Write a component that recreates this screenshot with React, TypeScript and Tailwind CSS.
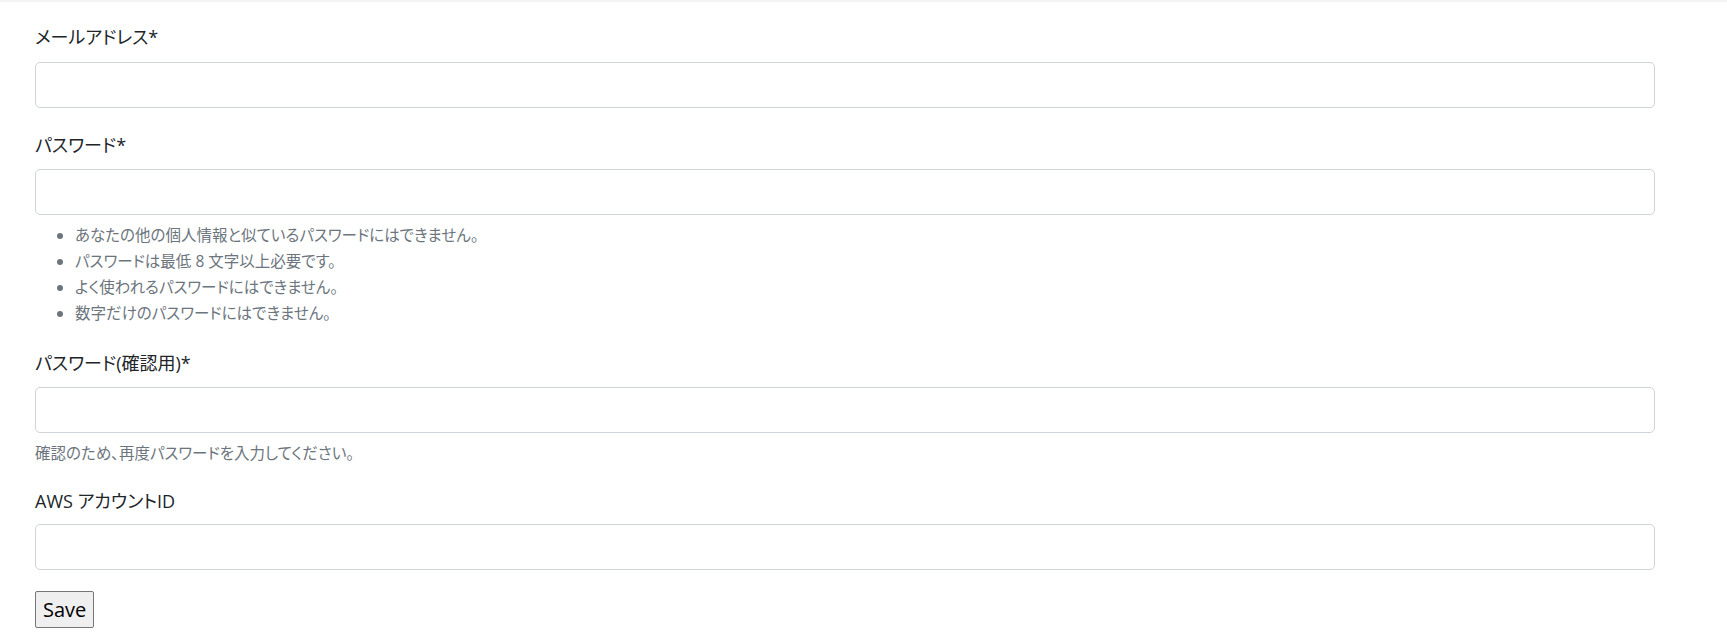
import React from "react";

const font = {
     fontFamily: '"Open Sans", "Noto Sans CJK JP", sans-serif',
};

const rules = [
     "あなたの他の個人情報と似ているパスワードにはできません。",
     "パスワードは最低 8 文字以上必要です。",
     "よく使われるパスワードにはできません。",
     "数字だけのパスワードにはできません。",
];

function Label({ children }: { children: React.ReactNode }) {
     return (
          <label className="block h-[30px] leading-[30px] text-[18px] text-[#212529] [font-feature-settings:'palt']">
               {children}
          </label>
     );
}

function Input({ type = "text" }: { type?: string }) {
     return (
          <input
               type={type}
               className="block w-[1620px] h-[46px] border border-[#ced4da] rounded-[5px] bg-white px-3 outline-none"
          />
     );
}

export default function App() {
     return (
          <div className="min-h-screen bg-white" style={font}>
               <div className="h-[2px] bg-[#f3f3f3]" />
               <form className="pl-[35px] pt-[20px]">
                    {/* メールアドレス */}
                    <Label>メールアドレス*</Label>
                    <div className="mt-[10px]">
                         <Input type="email" />
                    </div>

                    {/* パスワード */}
                    <div className="mt-[22px]">
                         <Label>パスワード*</Label>
                    </div>
                    <div className="mt-[9px]">
                         <Input type="password" />
                    </div>
                    <ul className="mt-[7px] pl-[40px] list-disc text-[15.5px] leading-[26px] text-[#6c757d] [font-feature-settings:'palt']">
                         {rules.map((r) => (
                              <li key={r}>{r}</li>
                         ))}
                    </ul>

                    {/* パスワード(確認用) */}
                    <div className="mt-[22px]">
                         <Label>パスワード(確認用)*</Label>
                    </div>
                    <div className="mt-[9px]">
                         <Input type="password" />
                    </div>
                    <p className="mt-[7px] h-[26px] leading-[26px] text-[15.5px] text-[#6c757d] [font-feature-settings:'palt']">
                         確認のため、再度パスワードを入力してください。
                    </p>

                    {/* AWS アカウントID */}
                    <div className="mt-[20px]">
                         <Label>AWS アカウントID</Label>
                    </div>
                    <div className="mt-[8px]">
                         <Input />
                    </div>

                    <button
                         type="button"
                         className="mt-[21px] h-[37px] px-[7px] border border-[#767676] rounded-[2px] bg-[#efefef] text-[20px] leading-[30px] text-black"
                    >
                         Save
                    </button>
               </form>
          </div>
     );
}
